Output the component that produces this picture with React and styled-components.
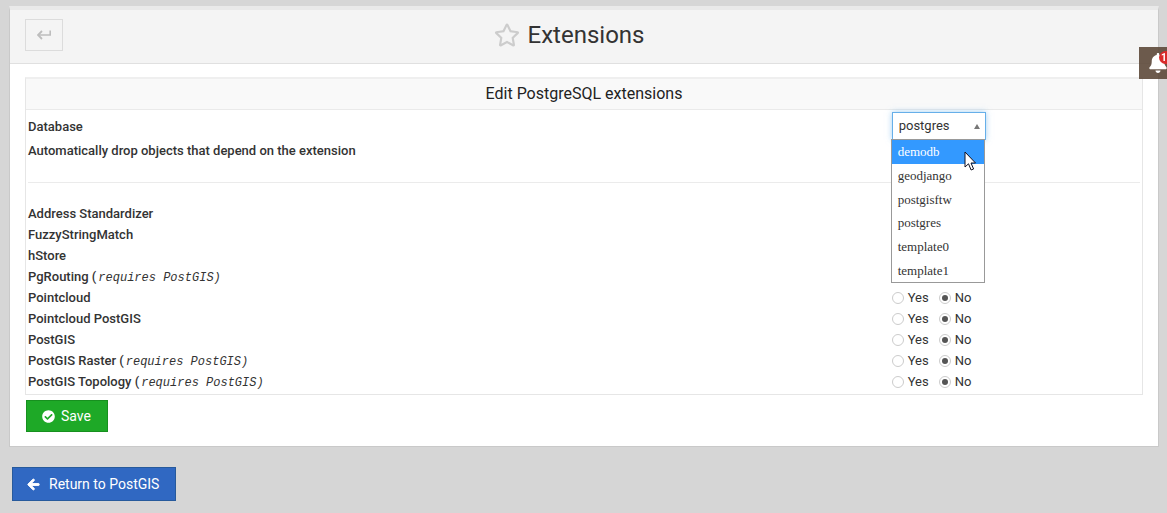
import React, { useState } from 'react';
import styled, { createGlobalStyle } from 'styled-components';
import { FaRegStar, FaCheckCircle, FaArrowLeft, FaBell } from 'react-icons/fa';

const GlobalStyle = createGlobalStyle`
  *, *::before, *::after { box-sizing: border-box; }
  body {
    margin: 0;
    background: #d6d6d6;
    color: #333;
    font: 13px/20px Roboto, "Liberation Sans", sans-serif;
    overflow-x: hidden;
  }
  button, input, select { font-family: inherit; }
`;

const Page = styled.main`
  padding: 6px 8px 12px 9px;
`;

const Panel = styled.section`
  background: #fff;
  border: 1px solid #c9c9c9;
  border-top: 4px solid #e9e9e9;
`;

const PanelHeader = styled.header`
  display: grid;
  grid-template-columns: 38px 1fr 68px;
  align-items: center;
  padding: 9px 15px 12px;
  background: #f4f4f4;
  border-bottom: 1px solid #e0e0e0;
`;

const BackButton = styled.button`
  display: flex;
  align-items: center;
  justify-content: center;
  width: 38px;
  height: 32px;
  padding: 0;
  background: transparent;
  border: 1px solid #dcdcdc;
`;

const Title = styled.h1`
  display: flex;
  align-items: center;
  justify-content: center;
  gap: 8px;
  margin: 0;
  font-size: 24px;
  line-height: 32px;
  font-weight: 400;

  svg { color: #ccc; }
`;

const PanelBody = styled.form`
  padding: 13px 15px 14px;
`;

const FormBox = styled.div`
  border: 1px solid #e6e6e6;
  border-top: 2px solid #efefef;
`;

const FormTitle = styled.h2`
  margin: 0;
  padding: 3px 0 4px;
  background: #f9f9f9;
  border-bottom: 1px solid #eaeaea;
  color: #222;
  font-size: 16px;
  line-height: 23px;
  font-weight: 400;
  text-align: center;
`;

const Rows = styled.div`
  padding: 2px;
`;

const Row = styled.div`
  display: grid;
  grid-template-columns: 80fr 23fr;
  align-items: center;
  height: ${(p) => (p.$tall ? 28 : 21)}px;
`;

const RowLabel = styled.label`
  padding-top: 1px;
  font-weight: 500;
`;

const Hint = styled.i`
  margin-left: 2px;
  font-family: "Liberation Mono", monospace;
  font-size: 12px;
  line-height: 16px;
  font-weight: 400;
`;

const Divider = styled.hr`
  height: 1px;
  margin: 21px 0 20px;
  border: 0;
  background: #ebebeb;
`;

const RadioSet = styled.div`
  display: flex;
  gap: 10px;
`;

const RadioLabel = styled.label`
  display: flex;
  align-items: center;
  gap: 4px;
`;

const Radio = styled.input`
  appearance: none;
  display: grid;
  place-items: center;
  width: 12px;
  height: 12px;
  margin: 0;
  background: #fff;
  border: 1px solid #ccc;
  border-radius: 50%;

  &:checked::before {
    content: "";
    width: 6px;
    height: 6px;
    border-radius: 50%;
    background: #555;
  }
`;

const SelectWrap = styled.div`
  position: relative;
  width: 94px;
`;

const Select = styled.select`
  appearance: none;
  display: block;
  width: 100%;
  height: 28px;
  padding: 0 6px 2px;
  background: #fff;
  border: 1px solid #66afe9;
  border-radius: 0;
  box-shadow: 0 0 6px rgba(102, 175, 233, 0.6);
  color: #333;
  font-size: 13px;
  outline: none;
`;

const Caret = styled.span`
  position: absolute;
  top: 12px;
  right: 6px;
  border: 3px solid transparent;
  border-top: 0;
  border-bottom: 5px solid #777;
  pointer-events: none;
`;

const OptionList = styled.ul`
  position: absolute;
  z-index: 2;
  top: 27px;
  left: -1px;
  display: grid;
  grid-auto-rows: 1fr;
  width: 94px;
  height: 144px;
  margin: 0;
  padding: 0;
  list-style: none;
  background: #fff;
  border: 1px solid #999;
  font-family: "Liberation Serif", serif;
  font-size: 13px;
`;

const Option = styled.li`
  display: flex;
  align-items: center;
  padding: 1px 0 0 6px;
  background: ${(p) => (p.$active ? '#3399ff' : '#fff')};
  color: ${(p) => (p.$active ? '#fff' : '#333')};
`;

const Pointer = styled.svg`
  position: absolute;
  z-index: 3;
  top: 39px;
  left: 72px;
  pointer-events: none;
`;

const ActionButton = styled.button`
  display: inline-flex;
  align-items: center;
  gap: ${(p) => (p.$blue ? 9 : 6)}px;
  height: ${(p) => (p.$blue ? 34 : 32)}px;
  padding: ${(p) => (p.$blue ? '0 16px 0 14px' : '0 16px 0 15px')};
  background: ${(p) => (p.$blue ? '#3068c2' : '#1ea927')};
  border: 1px solid ${(p) => (p.$blue ? '#275a9c' : '#17901f')};
  color: #fff;
  font-size: 14px;

  svg {
    stroke: currentColor;
    stroke-width: ${(p) => (p.$blue ? 36 : 0)};
    overflow: visible;
  }
`;

const SaveBar = styled.div`
  display: flex;
  padding: 5px 1px 0;
`;

const Footer = styled.footer`
  display: flex;
  padding: 20px 3px 0;
`;

const AlertTab = styled.button`
  position: fixed;
  z-index: 5;
  top: 47px;
  right: 0;
  width: 28px;
  height: 32px;
  padding: 0 0 0 9px;
  overflow: hidden;
  background: rgba(93, 73, 58, 0.9);
  border: 0;
  color: #fff;

  svg { display: block; }
`;

const AlertCount = styled.span`
  position: absolute;
  top: 4px;
  right: 0;
  width: 8px;
  padding-left: 2px;
  background: #d92b2b;
  border-radius: 7px 0 0 7px;
  font-size: 10px;
  line-height: 13px;
  font-weight: 700;
  text-align: left;
`;

const databases = ['demodb', 'geodjango', 'postgisftw', 'postgres', 'template0', 'template1'];

const extensions = [
  { id: 'address', name: 'Address Standardizer', covered: true },
  { id: 'fuzzy', name: 'FuzzyStringMatch', covered: true },
  { id: 'hstore', name: 'hStore', covered: true },
  { id: 'pgrouting', name: 'PgRouting', hint: true, covered: true },
  { id: 'pointcloud', name: 'Pointcloud' },
  { id: 'pointcloudgis', name: 'Pointcloud PostGIS' },
  { id: 'postgis', name: 'PostGIS' },
  { id: 'raster', name: 'PostGIS Raster', hint: true },
  { id: 'topology', name: 'PostGIS Topology', hint: true },
];

// Rows that lie under the open database list show no choices.
function YesNoRow({ id, name, hint, covered }) {
  return (
    <Row role="radiogroup" aria-labelledby={`${id}-label`}>
      <RowLabel as="span" id={`${id}-label`}>
        {name}
        {hint && <> (<Hint>requires PostGIS)</Hint></>}
      </RowLabel>
      {!covered && (
        <RadioSet>
          <RadioLabel><Radio type="radio" name={id} value="yes" />Yes</RadioLabel>
          <RadioLabel><Radio type="radio" name={id} value="no" defaultChecked />No</RadioLabel>
        </RadioSet>
      )}
    </Row>
  );
}

export default function App() {
  const [database, setDatabase] = useState('postgres');
  return (
    <>
      <GlobalStyle />
      <Page>
        <Panel>
          <PanelHeader>
            <BackButton type="button" aria-label="Back">
              <svg width="14" height="10" viewBox="0 0 14 10" fill="none" stroke="#bdbdbd">
                <path d="M13.2 0.5V5H2" strokeWidth="1.6" />
                <path d="M5 1L1 5l4 4" strokeWidth="1.8" />
              </svg>
            </BackButton>
            <Title><FaRegStar size={26} />Extensions</Title>
          </PanelHeader>
          <PanelBody onSubmit={(e) => e.preventDefault()}>
            <FormBox>
              <FormTitle>Edit PostgreSQL extensions</FormTitle>
              <Rows>
                <Row $tall>
                  <RowLabel htmlFor="database">Database</RowLabel>
                  <SelectWrap>
                    <Select id="database" value={database} onChange={(e) => setDatabase(e.target.value)}>
                      {databases.map((d) => <option key={d}>{d}</option>)}
                    </Select>
                    <Caret />
                    <OptionList role="listbox" aria-label="Database">
                      {databases.map((d, i) => (
                        <Option key={d} role="option" $active={i === 0} onClick={() => setDatabase(d)}>{d}</Option>
                      ))}
                    </OptionList>
                    <Pointer width="13" height="21" viewBox="0 0 13 21">
                      <path d="M1 1v15l3.500-3.200 2.600 6.200 2.500-1-2.600-6h4.500z" fill="#fff" stroke="#112" />
                    </Pointer>
                  </SelectWrap>
                </Row>
                <YesNoRow id="cascade" name="Automatically drop objects that depend on the extension" covered />
                <Divider />
                {extensions.map((e) => <YesNoRow key={e.id} {...e} />)}
              </Rows>
            </FormBox>
            <SaveBar>
              <ActionButton type="submit"><FaCheckCircle size={13} />Save</ActionButton>
            </SaveBar>
          </PanelBody>
        </Panel>
        <Footer>
          <ActionButton type="button" $blue><FaArrowLeft size={13} />Return to PostGIS</ActionButton>
        </Footer>
      </Page>
      <AlertTab type="button" aria-label="Notifications">
        <FaBell size={20} />
        <AlertCount>1</AlertCount>
      </AlertTab>
    </>
  );
}
